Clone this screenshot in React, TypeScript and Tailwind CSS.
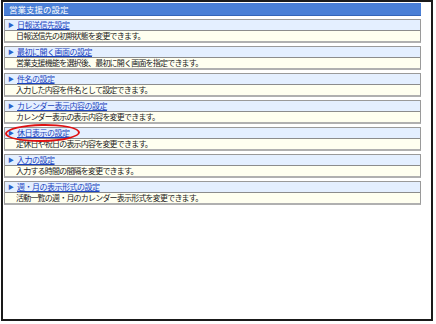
const items = [
  { title: "日報送信先設定", desc: "日報送信先の初期状態を変更できます。" },
  { title: "最初に開く画面の設定", desc: "営業支援機能を選択後、最初に開く画面を指定できます。" },
  { title: "件名の設定", desc: "入力した内容を件名として設定できます。" },
  { title: "カレンダー表示内容の設定", desc: "カレンダー表示の表示内容を変更できます。" },
  { title: "休日表示の設定", desc: "定休日や祝日の表示内容を変更できます。", mark: true },
  { title: "入力の設定", desc: "入力する時間の間隔を変更できます。" },
  { title: "週・月の表示形式の設定", desc: "活動一覧の週・月のカレンダー表示形式を変更できます。" },
];

function SettingItem({ title, desc, mark }: { title: string; desc: string; mark?: boolean }) {
  return (
    <div className="border border-[#9a9a9a] border-b-2 border-b-[#b0b0b0]">
      <div className="relative h-[11px] bg-[#e4efff] flex items-center pl-[3px] border-b border-[#8c8c8c]">
        <span className="text-[#2a62c9] text-[6px] mr-[3px]">▶</span>
        <span className="text-[#1a44c0] underline underline-offset-1 tracking-[-0.5px]">{title}</span>
        {mark && (
          <span className="absolute left-[0px] top-[-4px] w-[75px] h-[18px] rounded-[50%] border-2 border-[#e01010] -rotate-1" />
        )}
      </div>
      <div className="h-[10px] bg-[#fffff0] flex items-center pl-[11px] text-[#222] tracking-[-0.8px]">{desc}</div>
    </div>
  );
}

export default function App() {
  return (
    <div className="w-[436px] h-[324px] bg-white pl-[1px]">
      <div
        className="w-[432px] h-[321px] border-2 border-[#1a1a1a] p-[1px] pr-[10px] flex flex-col gap-[3px] bg-white"
        style={{ fontFamily: '"Noto Sans CJK JP", sans-serif', fontSize: "8px", lineHeight: "10px" }}
      >
        <div className="h-[13px] bg-[#4a7fd6] text-white pl-[5px] flex items-center border-b border-[#3565b8] text-[8.5px]">
          営業支援の設定
        </div>
        {items.map((it) => (
          <SettingItem key={it.title} {...it} />
        ))}
      </div>
    </div>
  );
}
